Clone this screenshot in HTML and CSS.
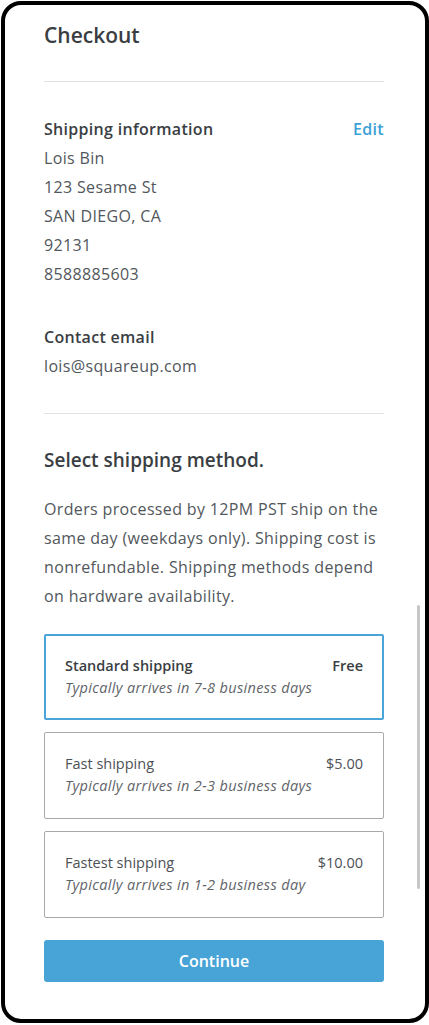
FILE: index.html
```html
<!DOCTYPE html>
<html lang="en">
<head>
<meta charset="utf-8">
<title>Checkout</title>
<link rel="stylesheet" href="styles.css">
</head>
<body>
<div class="frame">
  <div class="content">
    <h1 class="title">Checkout</h1>
    <hr class="divider first">
    <section class="block">
      <div class="row">
        <h2 class="label">Shipping information</h2>
        <a class="edit" href="#">Edit</a>
      </div>
      <p class="line">Lois Bin</p>
      <p class="line">123 Sesame St</p>
      <p class="line">SAN DIEGO, CA</p>
      <p class="line">92131</p>
      <p class="line">8588885603</p>
    </section>
    <section class="block contact">
      <h2 class="label">Contact email</h2>
      <p class="line">lois@squareup.com</p>
    </section>
    <hr class="divider">
    <h2 class="subtitle">Select shipping method.</h2>
    <p class="note">Orders processed by 12PM PST ship on the same day (weekdays only). Shipping cost is nonrefundable. Shipping methods depend on hardware availability.</p>
    <div class="options">
      <div class="option selected">
        <div class="opt-row"><span class="opt-name">Standard shipping</span><span class="opt-price">Free</span></div>
        <div class="opt-desc">Typically arrives in 7-8 business days</div>
      </div>
      <div class="option">
        <div class="opt-row"><span class="opt-name">Fast shipping</span><span class="opt-price">$5.00</span></div>
        <div class="opt-desc">Typically arrives in 2-3 business days</div>
      </div>
      <div class="option">
        <div class="opt-row"><span class="opt-name">Fastest shipping</span><span class="opt-price">$10.00</span></div>
        <div class="opt-desc">Typically arrives in 1-2 business day</div>
      </div>
    </div>
    <button class="continue">Continue</button>
  </div>
  <div class="scrollbar"></div>
</div>
</body>
</html>
```
FILE: styles.css
```css
* { box-sizing: border-box; }
html, body { margin: 0; padding: 0; background: #fff; }
body { font-family: "Open Sans", Lato, sans-serif; color: #4d5156; }
.frame {
  position: relative;
  margin: 1px 0 0 1px;
  width: 428px;
  height: 1022px;
  border: 4px solid #000;
  border-radius: 20px;
  overflow: hidden;
  background: #fff;
}
.content {
  width: 340px;
  margin-left: 39px;
  padding-top: 16px;
}
.title {
  margin: 0;
  font-size: 21px;
  line-height: 28px;
  font-weight: 600;
  color: #3a3e43;
}
.divider {
  border: 0;
  height: 1px;
  background: #e3e3e3;
  margin: 32px 0 32px;
}
.divider.first { margin-bottom: 33px; }
.block { margin: 0; }
.row { display: flex; justify-content: space-between; align-items: center; }
.label {
  margin: 0;
  font-size: 16px;
  line-height: 29px;
  font-weight: 600;
  letter-spacing: 0.3px;
  color: #3a3e43;
}
.edit {
  font-size: 16px;
  line-height: 29px;
  font-weight: 600;
  letter-spacing: 0.3px;
  color: #3d9fd7;
  text-decoration: none;
}
.line {
  margin: 0;
  font-size: 16px;
  line-height: 29px;
  letter-spacing: 0.35px;
  color: #52575c;
}
.contact { margin-top: 34px; }
.subtitle {
  margin: 32px 0 0;
  font-size: 19px;
  line-height: 28px;
  font-weight: 600;
  color: #3a3e43;
}
.note {
  margin: 21px 0 0;
  font-size: 16px;
  line-height: 29px;
  letter-spacing: 0.35px;
  color: #52575c;
}
.options {
  margin-top: 23px;
  display: flex;
  flex-direction: column;
  gap: 12px;
}
.option {
  border: 1px solid #a9a9a9;
  border-radius: 2px;
  padding: 20px 20px;
  height: 87px;
}
.option.selected { border: 2px solid #4aa3d9; padding: 19px 19px; height: 86px; }
.opt-row { display: flex; justify-content: space-between; }
.opt-name, .opt-price {
  font-size: 14.5px;
  line-height: 22px;
  color: #4d5156;
}
.selected .opt-name, .selected .opt-price { font-weight: 600; color: #3a3e43; }
.opt-desc {
  font-size: 14.5px;
  line-height: 22px;
  font-style: italic;
  letter-spacing: 0.35px;
  color: #5f6469;
}
.continue {
  display: block;
  width: 100%;
  margin-top: 22px;
  height: 42px;
  border: 0;
  border-radius: 3px;
  background: #48a4d7;
  color: #fff;
  font-family: inherit;
  font-size: 16px;
  font-weight: 600;
}
.scrollbar {
  position: absolute;
  left: 412px;
  top: 600px;
  width: 3px;
  height: 284px;
  background: #c7c7c7;
  border-radius: 2px;
}
```
